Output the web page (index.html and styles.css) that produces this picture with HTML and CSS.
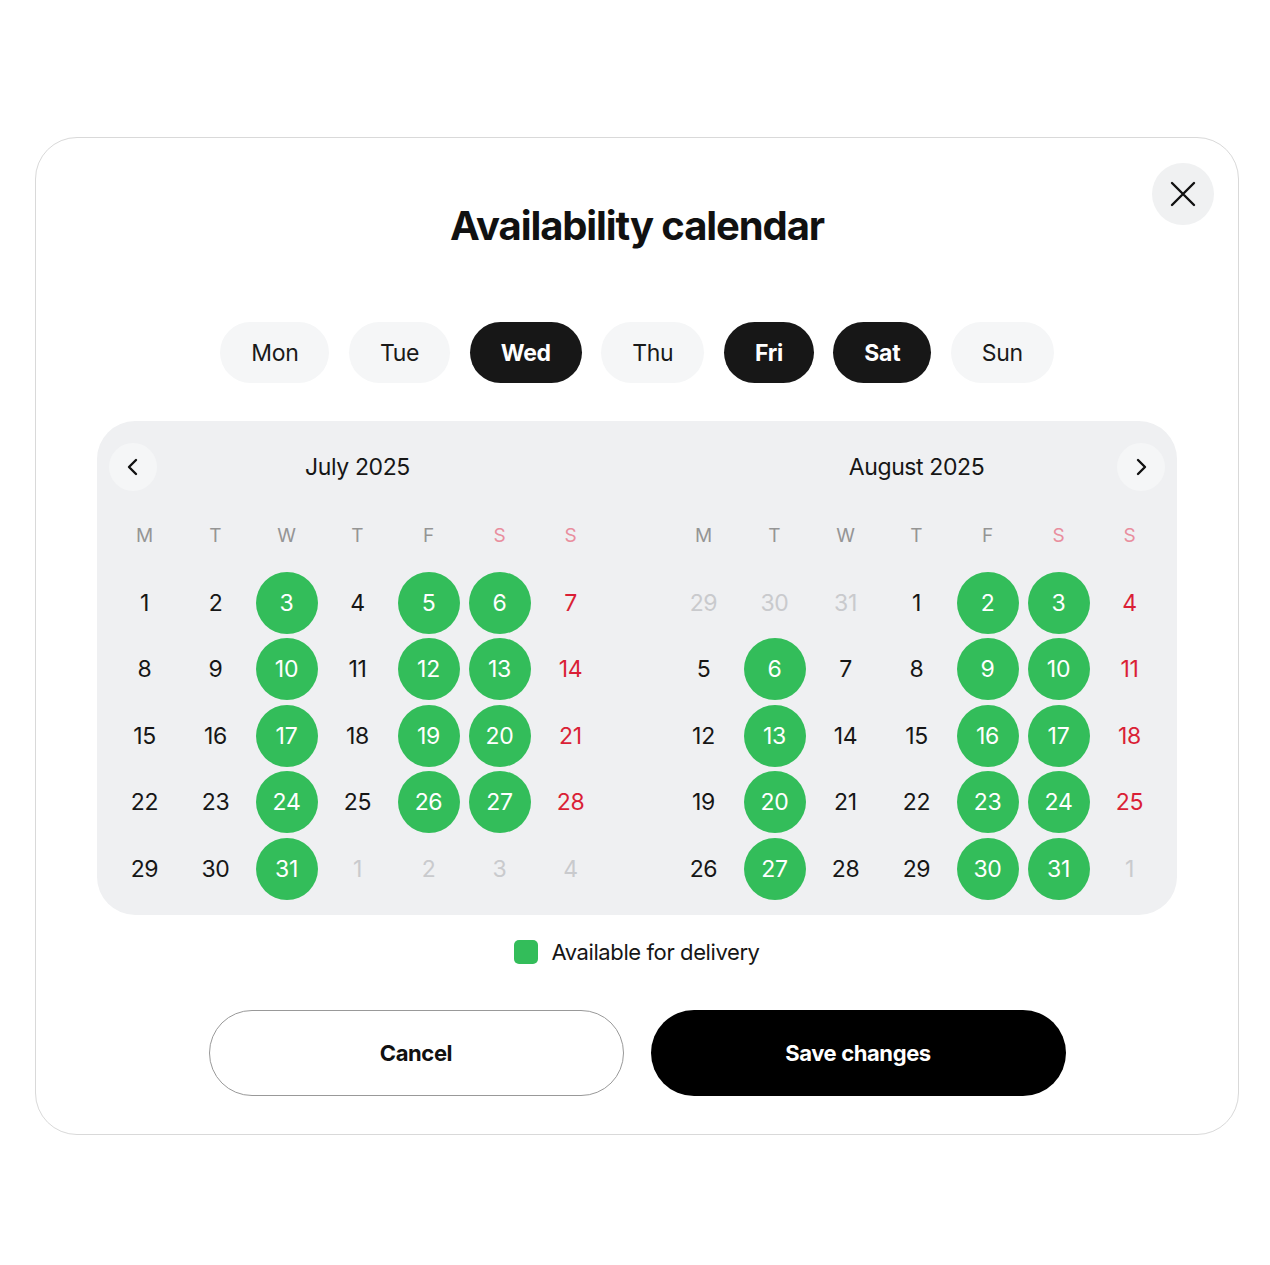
FILE: index.html
```html
<!DOCTYPE html>
<html lang="en">
<head>
<meta charset="utf-8">
<title>Availability calendar</title>
<link rel="stylesheet" href="styles.css">
</head>
<body>
<div class="modal">
  <button class="close" aria-label="Close">
    <svg width="26" height="26" viewBox="0 0 26 26"><path d="M2 2 L24 24 M24 2 L2 24" stroke="#111" stroke-width="2.4" stroke-linecap="round" fill="none"/></svg>
  </button>
  <h1 class="title">Availability calendar</h1>
  <div class="pills">
    <span class="pill">Mon</span>
    <span class="pill">Tue</span>
    <span class="pill on">Wed</span>
    <span class="pill">Thu</span>
    <span class="pill on">Fri</span>
    <span class="pill on">Sat</span>
    <span class="pill">Sun</span>
  </div>
  <div class="panel">
    <div class="month">
      <div class="mhead">
        <button class="nav" aria-label="Previous"><svg width="14" height="18" viewBox="0 0 14 18"><path d="M10 2 L3 9 L10 16" stroke="#111" stroke-width="2.4" fill="none" stroke-linecap="round" stroke-linejoin="round"/></svg></button>
        <div class="mtitle">July 2025</div>
        <span class="navspace"></span>
      </div>
      <div class="grid">
        <span class="wd">M</span><span class="wd">T</span><span class="wd">W</span><span class="wd">T</span><span class="wd">F</span><span class="wd we">S</span><span class="wd we">S</span>
        <span class="d">1</span><span class="d">2</span><span class="d g">3</span><span class="d">4</span><span class="d g">5</span><span class="d g">6</span><span class="d r">7</span>
        <span class="d">8</span><span class="d">9</span><span class="d g">10</span><span class="d">11</span><span class="d g">12</span><span class="d g">13</span><span class="d r">14</span>
        <span class="d">15</span><span class="d">16</span><span class="d g">17</span><span class="d">18</span><span class="d g">19</span><span class="d g">20</span><span class="d r">21</span>
        <span class="d">22</span><span class="d">23</span><span class="d g">24</span><span class="d">25</span><span class="d g">26</span><span class="d g">27</span><span class="d r">28</span>
        <span class="d">29</span><span class="d">30</span><span class="d g">31</span><span class="d m">1</span><span class="d m">2</span><span class="d m">3</span><span class="d m">4</span>
      </div>
    </div>
    <div class="month">
      <div class="mhead">
        <span class="navspace"></span>
        <div class="mtitle">August 2025</div>
        <button class="nav" aria-label="Next"><svg width="14" height="18" viewBox="0 0 14 18"><path d="M4 2 L11 9 L4 16" stroke="#111" stroke-width="2.4" fill="none" stroke-linecap="round" stroke-linejoin="round"/></svg></button>
      </div>
      <div class="grid">
        <span class="wd">M</span><span class="wd">T</span><span class="wd">W</span><span class="wd">T</span><span class="wd">F</span><span class="wd we">S</span><span class="wd we">S</span>
        <span class="d m">29</span><span class="d m">30</span><span class="d m">31</span><span class="d">1</span><span class="d g">2</span><span class="d g">3</span><span class="d r">4</span>
        <span class="d">5</span><span class="d g">6</span><span class="d">7</span><span class="d">8</span><span class="d g">9</span><span class="d g">10</span><span class="d r">11</span>
        <span class="d">12</span><span class="d g">13</span><span class="d">14</span><span class="d">15</span><span class="d g">16</span><span class="d g">17</span><span class="d r">18</span>
        <span class="d">19</span><span class="d g">20</span><span class="d">21</span><span class="d">22</span><span class="d g">23</span><span class="d g">24</span><span class="d r">25</span>
        <span class="d">26</span><span class="d g">27</span><span class="d">28</span><span class="d">29</span><span class="d g">30</span><span class="d g">31</span><span class="d m">1</span>
      </div>
    </div>
  </div>
  <div class="legend"><span class="swatch"></span><span>Available for delivery</span></div>
  <div class="actions">
    <button class="btn cancel">Cancel</button>
    <button class="btn save">Save changes</button>
  </div>
</div>
</body>
</html>
```
FILE: styles.css
```css
* { box-sizing: border-box; }
html, body { margin: 0; padding: 0; background: #fff; }
body {
  font-family: Inter, "Liberation Sans", sans-serif;
  color: #161616;
  padding: 137px 32px 0 35px;
}
button { font-family: inherit; border: none; cursor: pointer; }

.modal {
  position: relative;
  width: 1204px;
  height: 998px;
  border: 1px solid #d9d9d9;
  border-radius: 42px;
  background: #fff;
  padding: 0 60px 37px;
  display: flex;
  flex-direction: column;
  align-items: center;
}

.close {
  position: absolute;
  top: 25px;
  right: 24px;
  width: 62px;
  height: 62px;
  border-radius: 50%;
  background: #f0f1f2;
  display: flex;
  align-items: center;
  justify-content: center;
  padding: 0;
}

.title {
  margin: 60px 0 0;
  height: 56px;
  line-height: 56px;
  font-size: 40px;
  font-weight: 700;
  letter-spacing: -1.1px;
  color: #111;
}

.pills {
  display: flex;
  gap: 19.5px;
  margin-top: 68px;
}
.pill {
  height: 61px;
  padding: 0 31px;
  border-radius: 31px;
  background: #f5f6f7;
  font-size: 23px;
  letter-spacing: -0.3px;
  display: flex;
  align-items: center;
  color: #1a1a1a;
}
.pill.on {
  background: #171717;
  color: #fff;
  font-weight: 700;
}

.panel {
  margin-top: 38px;
  width: 1080px;
  height: 494px;
  background: #eff0f2;
  border-radius: 38px;
  padding: 22px 12px 14px;
  display: grid;
  grid-template-columns: 1fr 1fr;
  column-gap: 62px;
}

.mhead {
  display: grid;
  grid-template-columns: 48px 1fr 48px;
  align-items: center;
  height: 48px;
}
.nav {
  width: 48px;
  height: 48px;
  border-radius: 50%;
  background: #f5f6f7;
  display: flex;
  align-items: center;
  justify-content: center;
  padding: 0;
}
.mtitle {
  text-align: center;
  font-size: 23px;
  letter-spacing: -0.4px;
  color: #161616;
}

.grid {
  display: grid;
  grid-template-columns: repeat(7, 1fr);
  grid-template-rows: 63px;
  grid-auto-rows: 62px;
  row-gap: 4.5px;
  margin-top: 13px;
}
.wd {
  display: flex;
  align-items: center;
  justify-content: center;
  font-size: 19px;
  color: #959595;
}
.wd.we { color: #e98e9e; }

.d {
  justify-self: center;
  width: 62px;
  height: 62px;
  border-radius: 50%;
  display: flex;
  align-items: center;
  justify-content: center;
  font-size: 23px;
  letter-spacing: -0.3px;
  color: #161616;
}
.d.g { background: #33bd5a; color: #fff; }
.d.r { color: #da1f36; }
.d.m { color: #c9cacd; }

.legend {
  margin-top: 23px;
  height: 28px;
  display: flex;
  align-items: center;
  gap: 13px;
  font-size: 22px;
  letter-spacing: -0.4px;
  color: #161616;
}
.swatch {
  width: 24px;
  height: 24px;
  border-radius: 5px;
  background: #33bd5a;
}

.actions {
  margin-top: 44px;
  display: flex;
  gap: 27px;
}
.btn {
  width: 415px;
  height: 86px;
  border-radius: 43px;
  font-size: 22px;
  font-weight: 700;
  letter-spacing: -0.4px;
}
.cancel {
  background: #fff;
  border: 1.5px solid #999;
  color: #111;
}
.save {
  background: #000;
  color: #fff;
}
```
